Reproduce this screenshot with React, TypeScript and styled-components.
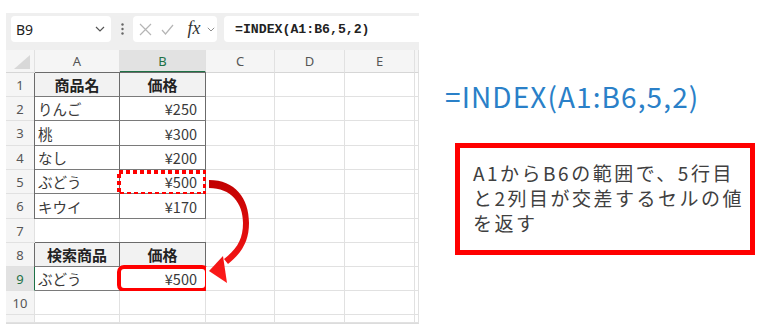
import React from 'react';
import styled, { createGlobalStyle } from 'styled-components';

const Global = createGlobalStyle`
  html, body { margin: 0; padding: 0; background: #ffffff; }
  body { width: 770px; height: 331px; overflow: hidden; }
`;

const JP = `"Noto Sans CJK JP", "Noto Sans", sans-serif`;
const UI = `"Noto Sans", "Open Sans", sans-serif`;

const GRID = '#e1e1e1';
const DARK = '#6b6b6b';
const GREEN = '#1e7145';

const Page = styled.div`
  display: flex;
  flex-direction: row;
  align-items: flex-start;
  width: 770px;
  height: 331px;
`;

const Frame = styled.div`
  position: relative;
  margin: 13px 0 0 6px;
  width: 413px;
  display: flex;
  flex-direction: column;
`;

const Toolbar = styled.div`
  height: 37px;
  background: #efefef;
  display: flex;
  align-items: flex-start;
  padding: 3px 0 0 5px;
  box-sizing: border-box;
`;

const NameBox = styled.div`
  width: 100px;
  height: 26px;
  background: #fff;
  border-radius: 4px;
  display: flex;
  align-items: center;
  justify-content: space-between;
  padding: 0 6px 0 5px;
  box-sizing: border-box;
  font-family: ${UI};
  font-size: 14px;
  color: #222;
`;

const Kebab = styled.div`
  width: 22px;
  height: 26px;
  display: flex;
  align-items: center;
  justify-content: center;
`;

const FuncBox = styled.div`
  width: 84px;
  height: 26px;
  background: #fff;
  border-radius: 4px;
  display: flex;
  align-items: center;
  padding: 0 0 0 5px;
  box-sizing: border-box;
`;

const IconSlot = styled.div<{ $w: number }>`
  width: ${p => p.$w}px;
  height: 26px;
  display: flex;
  align-items: center;
  justify-content: center;
`;

const Fx = styled.span`
  font-family: "Liberation Serif", serif;
  font-style: italic;
  font-size: 18px;
  color: #333;
  line-height: 1;
  margin-top: -3px;
`;

const FormulaBox = styled.div`
  flex: 1;
  height: 26px;
  margin-left: 7px;
  background: #fff;
  border-radius: 4px 0 0 4px;
  display: flex;
  align-items: center;
  padding-left: 11px;
  font-family: "Liberation Mono", "DejaVu Sans Mono", monospace;
  font-size: 13.2px;
  font-weight: 700;
  color: #222;
`;

const Sheet = styled.div`
  display: grid;
  grid-template-columns: 29px 85px 86px 69px 70px 70px 4px;
  grid-template-rows: 23px 24px 24px 25px 24px 24px 25px 24px 24px 24px 24px 8px;
  border-bottom: 1px solid #dcdcdc;
  background: #fff;
`;

const ColHead = styled.div<{ $active?: boolean }>`
  box-sizing: border-box;
  background: ${p => (p.$active ? '#e2e2e2' : '#f5f5f5')};
  border-right: 1px solid ${GRID};
  border-bottom: ${p => (p.$active ? `2px solid ${GREEN}` : `1px solid #d6d6d6`)};
  display: flex;
  align-items: center;
  justify-content: center;
  font-family: ${UI};
  font-size: 13px;
  color: ${p => (p.$active ? GREEN : '#555')};
`;

const Corner = styled.div`
  box-sizing: border-box;
  background: #f5f5f5;
  border-right: 1px solid ${GRID};
  border-bottom: 1px solid #d6d6d6;
  display: flex;
  align-items: flex-end;
  justify-content: flex-end;
  padding: 0 4px 3px 0;
`;

const RowHead = styled.div<{ $active?: boolean }>`
  box-sizing: border-box;
  background: ${p => (p.$active ? '#e2e2e2' : '#f5f5f5')};
  border-right: 1px solid ${p => (p.$active ? GREEN : GRID)};
  border-bottom: 1px solid ${GRID};
  display: flex;
  align-items: center;
  justify-content: center;
  font-family: ${UI};
  font-size: 13px;
  color: ${p => (p.$active ? GREEN : '#555')};
`;

const Cell = styled.div<{
  $boxed?: boolean;
  $left?: boolean;
  $top?: boolean;
  $head?: boolean;
  $align?: 'left' | 'right' | 'center';
}>`
  position: relative;
  box-sizing: border-box;
  border-right: 1px solid ${p => (p.$boxed ? DARK : GRID)};
  border-bottom: 1px solid ${p => (p.$boxed ? '#7a7a7a' : GRID)};
  background: ${p => (p.$head ? '#f2f2f2' : '#fff')};
  box-shadow: ${p =>
    [p.$left ? `-1px 0 0 0 ${DARK}` : '', p.$top ? `0 -1px 0 0 ${DARK}` : '']
      .filter(Boolean)
      .join(', ') || 'none'};
  display: flex;
  align-items: center;
  justify-content: ${p =>
    p.$align === 'right' ? 'flex-end' : p.$align === 'center' ? 'center' : 'flex-start'};
  padding: ${p => (p.$align === 'right' ? '0 8px 0 0' : p.$align === 'left' ? '0 0 0 3px' : '0')};
  font-family: ${JP};
  font-size: ${p => (p.$head ? '15px' : '14.5px')};
  font-weight: ${p => (p.$head ? 700 : 400)};
  color: ${p => (p.$head ? '#222' : '#3a3a3a')};
  white-space: nowrap;
`;

const DottedMark = styled.svg`
  position: absolute;
  left: -3px;
  top: 0px;
  width: 90px;
  height: 26px;
  overflow: visible;
`;

const SolidMark = styled.div`
  position: absolute;
  left: -3px;
  top: -2px;
  right: -4px;
  bottom: -2px;
  border: 4px solid #ff0000;
  border-radius: 7px;
`;

const ArrowLayer = styled.svg`
  position: absolute;
  left: 0;
  top: 0;
  width: 413px;
  height: 311px;
  pointer-events: none;
`;

const Right = styled.div`
  display: flex;
  flex-direction: column;
  margin-left: 26px;
  padding-top: 82px;
`;

const Title = styled.div`
  font-family: ${JP};
  font-size: 28px;
  line-height: 28px;
  font-weight: 400;
  color: #2a80c8;
  white-space: nowrap;
  letter-spacing: 1.1px;
`;

const NoteBox = styled.div`
  margin: 33px 0 0 10px;
  width: 300px;
  height: 112px;
  box-sizing: border-box;
  border: 5px solid #ff0000;
  padding: 12px 0 0 13px;
  font-family: ${JP};
  font-size: 19px;
  line-height: 25px;
  letter-spacing: 2.5px;
  color: #404040;
  white-space: nowrap;
`;

type Row = {
  n: number;
  a?: string;
  b?: string;
  head?: boolean;
  boxed?: boolean;
  top?: boolean;
  mark?: 'dotted' | 'solid';
  active?: boolean;
};

const rows: Row[] = [
  { n: 1, a: '商品名', b: '価格', head: true, boxed: true, top: true },
  { n: 2, a: 'りんご', b: '¥250', boxed: true },
  { n: 3, a: '桃', b: '¥300', boxed: true },
  { n: 4, a: 'なし', b: '¥200', boxed: true },
  { n: 5, a: 'ぶどう', b: '¥500', boxed: true, mark: 'dotted' },
  { n: 6, a: 'キウイ', b: '¥170', boxed: true },
  { n: 7 },
  { n: 8, a: '検索商品', b: '価格', head: true, boxed: true, top: true },
  { n: 9, a: 'ぶどう', b: '¥500', boxed: true, mark: 'solid', active: true },
  { n: 10 },
];

const cols = ['A', 'B', 'C', 'D', 'E'];

const Chevron = ({ size = 10, color = '#555' }: { size?: number; color?: string }) => (
  <svg width={size} height={size * 0.6} viewBox="0 0 10 6">
    <path d="M1 1 L5 5 L9 1" fill="none" stroke={color} strokeWidth="1.2" />
  </svg>
);

export default function App() {
  return (
    <>
      <Global />
      <Page>
        <Frame>
          <Toolbar>
            <NameBox>
              <span>B9</span>
              <Chevron />
            </NameBox>
            <Kebab>
              <svg width="3" height="12" viewBox="0 0 3 12">
                <circle cx="1.5" cy="1.5" r="1.2" fill="#666" />
                <circle cx="1.5" cy="6" r="1.2" fill="#666" />
                <circle cx="1.5" cy="10.5" r="1.2" fill="#666" />
              </svg>
            </Kebab>
            <FuncBox>
              <IconSlot $w={14}>
                <svg width="13" height="13" viewBox="0 0 13 13">
                  <path d="M1 1 L12 12 M12 1 L1 12" stroke="#b5b5b5" strokeWidth="1.2" fill="none" />
                </svg>
              </IconSlot>
              <IconSlot $w={31}>
                <svg width="13" height="11" viewBox="0 0 13 11">
                  <path d="M1 6 L4.5 10 L12 1" stroke="#b5b5b5" strokeWidth="1.2" fill="none" />
                </svg>
              </IconSlot>
              <IconSlot $w={22}>
                <Fx>fx</Fx>
              </IconSlot>
              <IconSlot $w={11}>
                <Chevron size={8} color="#888" />
              </IconSlot>
            </FuncBox>
            <FormulaBox>=INDEX(A1:B6,5,2)</FormulaBox>
          </Toolbar>
          <Sheet>
            <Corner>
              <svg width="16" height="14" viewBox="0 0 16 14">
                <path d="M16 0 L16 14 L0 14 Z" fill="#d8d8d8" />
              </svg>
            </Corner>
            {cols.map(c => (
              <ColHead key={c} $active={c === 'B'}>
                {c}
              </ColHead>
            ))}
            <ColHead />
            {rows.map(r => (
              <React.Fragment key={r.n}>
                <RowHead $active={r.active}>{r.n}</RowHead>
                <Cell
                  $boxed={r.boxed}
                  $left={r.boxed && !r.active}
                  $top={r.top}
                  $head={r.head}
                  $align={r.head ? 'center' : 'left'}
                >
                  {r.a}
                </Cell>
                <Cell $boxed={r.boxed} $top={r.top} $head={r.head} $align={r.head ? 'center' : 'right'}>
                  {r.b}
                  {r.mark === 'dotted' && (
                    <DottedMark viewBox="0 0 90 26">
                      <rect
                        x="2"
                        y="2"
                        width="86"
                        height="22"
                        fill="none"
                        stroke="#ff0000"
                        strokeWidth="4"
                        strokeDasharray="4 3"
                      />
                    </DottedMark>
                  )}
                  {r.mark === 'solid' && <SolidMark />}
                </Cell>
                <Cell />
                <Cell />
                <Cell />
                <Cell />
              </React.Fragment>
            ))}
            {Array.from({ length: 7 }).map((_, i) =>
              i === 0 ? <RowHead key={i} /> : <Cell key={i} />
            )}
          </Sheet>
          <ArrowLayer viewBox="6 13 413 311">
            <defs>
              <linearGradient id="arrowGrad" x1="0" y1="179" x2="0" y2="282" gradientUnits="userSpaceOnUse">
                <stop offset="0" stopColor="#c00000" />
                <stop offset="1" stopColor="#ff1a1a" />
              </linearGradient>
            </defs>
            <path
              d="M209 180 C235 180 249 198 249 223 C249 240 243 252 228 264 L224 259 C237 249 243 239 243 223 C243 203 231 188 209 188 Z"
              fill="url(#arrowGrad)"
            />
            <path d="M209 271 L223 256 L227 283 Z" fill="url(#arrowGrad)" />
          </ArrowLayer>
        </Frame>
        <Right>
          <Title>=INDEX(A1:B6,5,2)</Title>
          <NoteBox>
            A1からB6の範囲で、5行目
            <br />
            と2列目が交差するセルの値
            <br />
            を返す
          </NoteBox>
        </Right>
      </Page>
    </>
  );
}
